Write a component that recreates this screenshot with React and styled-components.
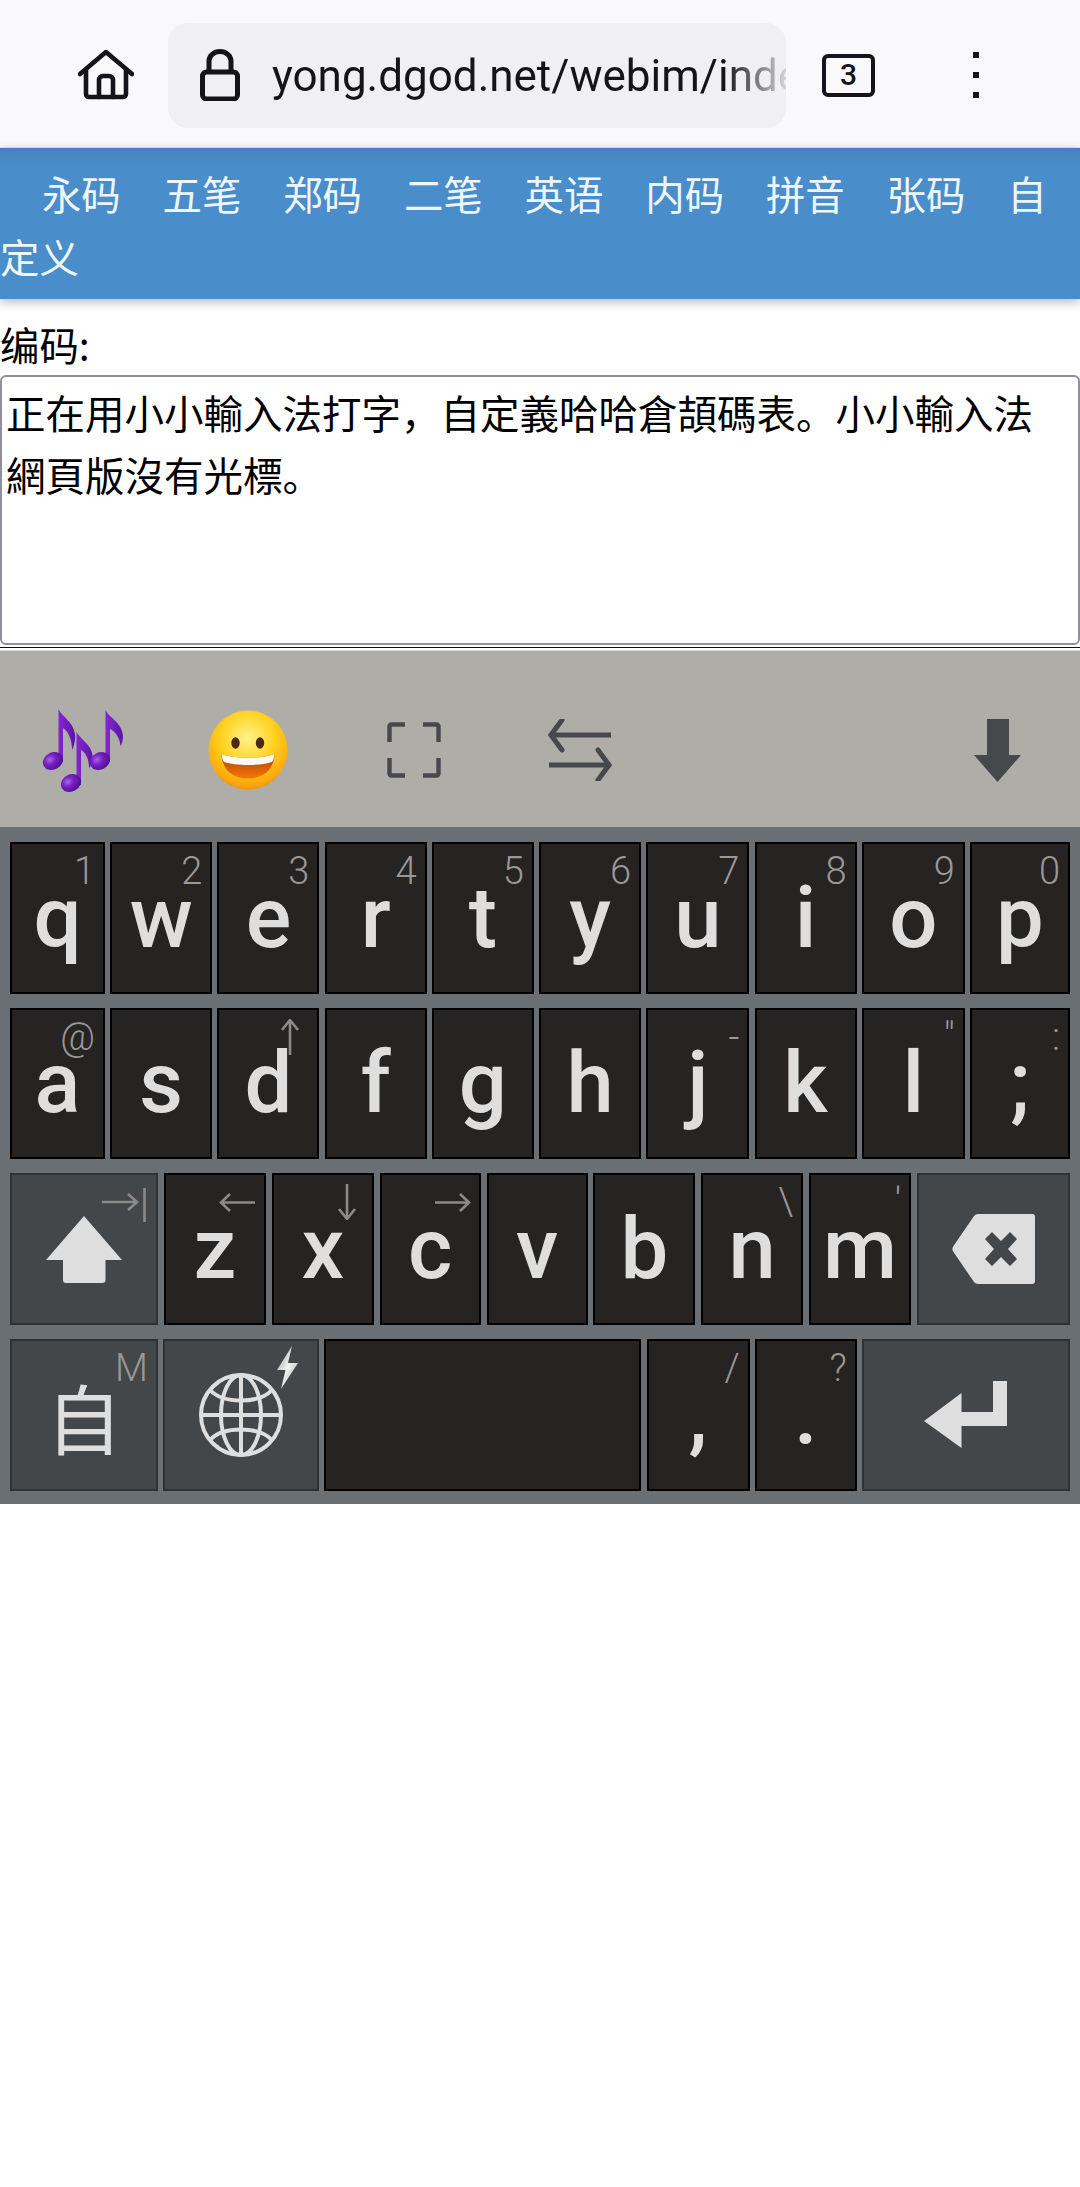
import React from "react";
import styled, { createGlobalStyle } from "styled-components";

const Global = createGlobalStyle`
  html, body { margin: 0; padding: 0; background: #fff; }
  body { font-family: "Noto Sans CJK SC", "Noto Sans", sans-serif; }
  * { box-sizing: border-box; }
`;

const Page = styled.div`
  width: 1080px;
  height: 2187px;
  background: #fff;
  overflow: hidden;
  display: flex;
  flex-direction: column;
`;

const BrowserBar = styled.header`
  height: 148px;
  background: #f9f9fb;
  display: flex;
  align-items: center;
  padding: 3px 0 0 0;
  border-bottom: 1px solid #dce8f0;
  flex-shrink: 0;
`;
const HomeSlot = styled.div`
  width: 168px;
  display: flex;
  padding-left: 78px;
`;
const UrlPill = styled.div`
  width: 618px;
  height: 105px;
  background: #f0f0f4;
  border-radius: 20px;
  display: flex;
  align-items: center;
  padding-left: 32px;
  overflow: hidden;
`;
const UrlText = styled.div`
  flex: 1;
  margin-left: 32px;
  padding-top: 2px;
  font: 400 44px/1.2 Roboto, sans-serif;
  color: #15141a;
  white-space: nowrap;
  overflow: hidden;
  -webkit-mask-image: linear-gradient(to right, #000 88%, rgba(0, 0, 0, 0.12) 100%);
  mask-image: linear-gradient(to right, #000 88%, rgba(0, 0, 0, 0.12) 100%);
`;
const TabsSlot = styled.div`
  margin-left: 36px;
  width: 53px;
  height: 43px;
  border: 4px solid #15141a;
  border-radius: 6px;
  font: 500 30px/1 Roboto, sans-serif;
  color: #15141a;
  display: flex;
  align-items: center;
  justify-content: center;
`;
const MenuDots = styled.div`
  margin-left: 98px;
  display: flex;
  flex-direction: column;
  gap: 14px;
  span {
    width: 6px;
    height: 6px;
    background: #15141a;
    display: block;
  }
`;

const Nav = styled.nav`
  height: 151px;
  padding: 13px 0 12px;
  background: linear-gradient(to bottom, #4482bf 0, #4a8dcb 18px);
  box-shadow: 0 3px 10px rgba(0, 0, 0, 0.28);
  font-size: 39.4px;
  line-height: 63px;
  color: #eef6fb;
  flex-shrink: 0;
`;
const NavLink = styled.span`
  margin-left: 41.9px;
`;

const Label = styled.div`
  padding-top: 14px;
  font-size: 39.4px;
  line-height: 62px;
  color: #000;
  height: 76px;
  flex-shrink: 0;
`;
const Editor = styled.div`
  height: 270px;
  border: 2px solid #8f8f9d;
  border-radius: 6px;
  padding: 4px 14px 0 4px;
  font-size: 39.5px;
  line-height: 62px;
  color: #000;
  flex-shrink: 0;
`;
const Rule = styled.div`
  height: 6px;
  flex-shrink: 0;
  background: linear-gradient(
    to bottom,
    #fff 0 2px,
    #111 2px 3.5px,
    #fff 3.5px 5px,
    #d8d7e6 5px 6px
  );
`;

const Toolbar = styled.div`
  height: 176px;
  padding-top: 22px;
  background: #aeada7;
  display: flex;
  justify-content: space-between;
  flex-shrink: 0;
`;
const ToolGroup = styled.div`
  display: flex;
`;
const ToolCell = styled.div`
  width: 165.6px;
  display: flex;
  align-items: center;
  justify-content: center;
`;

const Keyboard = styled.div`
  height: 677px;
  background: #6a6f73;
  padding: 15px 10px 13px;
  display: flex;
  flex-direction: column;
  gap: 14px;
  flex-shrink: 0;
`;
const Row = styled.div`
  display: flex;
  justify-content: space-between;
  height: 151.67px;
`;
const Key = styled.div`
  position: relative;
  width: ${(p) => p.$w}px;
  height: 100%;
  background: ${(p) => (p.$fn ? "#43474a" : "#252422")};
  border: 2px solid ${(p) => (p.$fn ? "#2e3235" : "#000")};
  display: flex;
  align-items: center;
  justify-content: center;
  font: 500 85px Roboto, sans-serif;
  color: #dedede;
`;
const Hint = styled.span`
  position: absolute;
  top: 8px;
  right: 8px;
  font: 300 38px/1 Roboto, sans-serif;
  color: #9a9896;
`;
const HintGlyph = styled.svg`
  position: absolute;
  top: ${(p) => p.$top}px;
  right: ${(p) => p.$right}px;
  fill: none;
  stroke: #8c8a88;
  stroke-width: 2.6;
`;
const CjkKeyLabel = styled.span`
  font: 400 76px/1 "Noto Sans CJK SC", sans-serif;
  color: #dedede;
  margin-top: 2px;
`;
const KeyIcon = styled.svg`
  fill: #dedede;
  display: block;
`;
const Bolt = styled.svg`
  position: absolute;
  top: 5px;
  right: 19px;
`;

const HomeIcon = () => (
  <svg width="56" height="50" viewBox="0 0 56 50" fill="none" stroke="#15141a" strokeWidth="4.6" strokeLinejoin="round" strokeLinecap="round">
    <path d="M2 24 L28 2 L54 24" />
    <path d="M8 20 V44 a3 3 0 0 0 3 3 H45 a3 3 0 0 0 3 -3 V20" />
    <path d="M21 47 V30 a4 4 0 0 1 4 -4 h6 a4 4 0 0 1 4 4 V47" />
  </svg>
);
const LockIcon = () => (
  <svg width="40" height="52" viewBox="0 0 40 52" fill="none" stroke="#15141a" strokeWidth="5">
    <rect x="2.5" y="23" width="35" height="27" rx="4" />
    <path d="M9 23 V12 a11 9.5 0 0 1 22 0 V23" />
  </svg>
);

const MusicIcon = () => (
  <svg width="82" height="83" viewBox="0 0 82 83">
    <defs>
      <radialGradient id="noteHead" cx="0.4" cy="0.35" r="0.7">
        <stop offset="0" stopColor="#a86ae0" />
        <stop offset="0.4" stopColor="#7a1fc6" />
        <stop offset="1" stopColor="#4a0f8c" />
      </radialGradient>
      <linearGradient id="noteStem" x1="0" y1="0" x2="1" y2="0">
        <stop offset="0" stopColor="#8526d2" />
        <stop offset="1" stopColor="#5c14a6" />
      </linearGradient>
    </defs>
    <g fill="url(#noteStem)">
      <path d="M16.5 0 C20 8 32 13 33 26 C33.5 31 32 38 30 41 C30 32 27 23 21 19 L21 52 L16.5 52 Z" />
      <path d="M34.5 23 C39 31 50 36 50.5 47 C50.5 52 49 57 47 59 C47 50 44 44 39 41 L39 76 L34.5 76 Z" />
      <path d="M63.5 1 C67 9 80 13 81 27 C81 31 80 35 78.5 37 C78 29 73 22 68 20 L68 52 L63.5 52 Z" />
    </g>
    <ellipse cx="11" cy="52" rx="10.5" ry="8.5" fill="url(#noteHead)" transform="rotate(-28 11 52)" />
    <ellipse cx="29" cy="74" rx="10.5" ry="8.5" fill="url(#noteHead)" transform="rotate(-28 29 74)" />
    <ellipse cx="58" cy="52" rx="10.5" ry="8.5" fill="url(#noteHead)" transform="rotate(-28 58 52)" />
  </svg>
);

const SmileIcon = () => (
  <svg width="80" height="80" viewBox="0 0 80 80">
    <defs>
      <radialGradient id="faceFill" cx="0.5" cy="0.35" r="0.68">
        <stop offset="0" stopColor="#fff38a" />
        <stop offset="0.5" stopColor="#ffd21f" />
        <stop offset="0.85" stopColor="#fba90f" />
        <stop offset="1" stopColor="#e98f10" />
      </radialGradient>
      <linearGradient id="mouthFill" x1="0" y1="0" x2="0" y2="1">
        <stop offset="0" stopColor="#b43c04" />
        <stop offset="1" stopColor="#f27a07" />
      </linearGradient>
    </defs>
    <circle cx="40" cy="40" r="39.5" fill="url(#faceFill)" />
    <ellipse cx="27.5" cy="33" rx="4.2" ry="5.8" fill="#4b2a12" />
    <ellipse cx="52" cy="33" rx="4.2" ry="5.8" fill="#4b2a12" />
    <path d="M13.5 44 C26 49 54 49 66.5 44 C66 60 55 68.5 40 68.5 C25 68.5 14 60 13.5 44 Z" fill="url(#mouthFill)" />
    <path d="M13.5 44 C26 49 54 49 66.5 44 C66 48 65.5 50 64 52 C52 56 28 56 16 52 C14.5 50 14 48 13.5 44 Z" fill="#fbfaf2" />
  </svg>
);

const FullscreenIcon = () => (
  <svg width="54" height="56" viewBox="0 0 54 56" fill="none" stroke="#45494c" strokeWidth="4.4" strokeLinejoin="round">
    <path d="M2.5 20 V4.5 a2 2 0 0 1 2 -2 H18" />
    <path d="M36 2.5 H49.5 a2 2 0 0 1 2 2 V20" />
    <path d="M2.5 36 V51.5 a2 2 0 0 0 2 2 H18" />
    <path d="M36 53.5 H49.5 a2 2 0 0 0 2 -2 V36" />
  </svg>
);
const SwapIcon = () => (
  <svg width="64" height="62" viewBox="0 0 64 62" fill="none" stroke="#45494c" strokeWidth="5">
    <path d="M63 16 H3" />
    <path d="M14 1 L3 16 L14 31" strokeLinecap="round" />
    <path d="M1 46 H61" />
    <path d="M50 31 L61 46 L50 61" strokeLinecap="round" />
  </svg>
);
const DownIcon = () => (
  <svg width="47" height="63" viewBox="0 0 47 63" fill="#45494c">
    <path d="M13 0 H35 V36 H47 L23.5 63 L0 36 H13 Z" />
  </svg>
);

const ShiftIcon = () => (
  <KeyIcon width="76" height="67" viewBox="0 0 76 67">
    <path d="M38 0 L76 44 H59.5 V64 a3 3 0 0 1 -3 3 H20 a3 3 0 0 1 -3 -3 V44 H0 Z" />
  </KeyIcon>
);
const BackspaceIcon = () => (
  <KeyIcon width="83" height="70" viewBox="0 0 83 70">
    <path fillRule="evenodd" d="M26 0 H80 a3 3 0 0 1 3 3 V67 a3 3 0 0 1 -3 3 H26 a6 6 0 0 1 -4 -2 L1.5 38 a5 5 0 0 1 0 -6 L22 2 a6 6 0 0 1 4 -2 Z M33 25 L42 35 L33 45 L40 52 L49 43 L58 52 L65 45 L56 35 L65 25 L58 18 L49 27 L40 18 Z" />
  </KeyIcon>
);
const EnterIcon = () => (
  <KeyIcon width="83" height="67" viewBox="0 0 83 67">
    <path d="M0 40 L37.5 12 V31 H69 V0 H83 V45 H37.5 V67 Z" />
  </KeyIcon>
);
const GlobeIcon = () => (
  <svg width="84" height="84" viewBox="0 0 84 84" fill="none" stroke="#dedede" strokeWidth="4">
    <circle cx="42" cy="42" r="40" />
    <ellipse cx="42" cy="42" rx="20" ry="40" />
    <path d="M42 2 V82" />
    <path d="M2 42 H82" />
    <path d="M11 17 C24 31 60 31 73 17" />
    <path d="M11 67 C24 53 60 53 73 67" />
  </svg>
);
const BoltIcon = () => (
  <Bolt width="21" height="43" viewBox="0 0 21 43">
    <defs>
      <linearGradient id="boltFill" x1="0" y1="0" x2="1" y2="1">
        <stop offset="0" stopColor="#8d8f90" />
        <stop offset="0.5" stopColor="#f4f4f4" />
        <stop offset="1" stopColor="#9a9c9d" />
      </linearGradient>
    </defs>
    <path d="M15 0 L11 17 L21 17 L4 43 L8.5 24 L0 24 Z" fill="url(#boltFill)" />
  </Bolt>
);

const hintGlyphs = {
  up: (
    <HintGlyph width="18" height="36" viewBox="0 0 18 36" $top={9} $right={18}>
      <path d="M9 36 V1 M1 11 L9 1 L17 11" />
    </HintGlyph>
  ),
  left: (
    <HintGlyph width="36" height="19" viewBox="0 0 36 19" $top={18} $right={9}>
      <path d="M36 9.5 H2 M11 1 L2 9.5 L11 18" />
    </HintGlyph>
  ),
  down: (
    <HintGlyph width="18" height="36" viewBox="0 0 18 36" $top={9} $right={16}>
      <path d="M9 0 V35 M1 25 L9 35 L17 25" />
    </HintGlyph>
  ),
  right: (
    <HintGlyph width="36" height="19" viewBox="0 0 36 19" $top={18} $right={8}>
      <path d="M0 9.5 H34 M25 1 L34 9.5 L25 18" />
    </HintGlyph>
  ),
  tab: (
    <HintGlyph width="44" height="34" viewBox="0 0 44 34" $top={13} $right={10}>
      <path d="M0 14 H35 M26 6 L35 14 L26 22 M42.5 0 V34" />
    </HintGlyph>
  ),
};

const rows = [
  [
    { t: "q", h: "1", w: 95 }, { t: "w", h: "2", w: 102 }, { t: "e", h: "3", w: 102 },
    { t: "r", h: "4", w: 102 }, { t: "t", h: "5", w: 102 }, { t: "y", h: "6", w: 102 },
    { t: "u", h: "7", w: 103 }, { t: "i", h: "8", w: 102 }, { t: "o", h: "9", w: 103 },
    { t: "p", h: "0", w: 100 },
  ],
  [
    { t: "a", h: "@", w: 95 }, { t: "s", w: 102 }, { t: "d", g: "up", w: 102 },
    { t: "f", w: 102 }, { t: "g", w: 102 }, { t: "h", w: 102 },
    { t: "j", h: "-", w: 103 }, { t: "k", w: 102 }, { t: "l", h: '"', w: 103 },
    { t: ";", h: ":", w: 100 },
  ],
  [
    { icon: <ShiftIcon />, g: "tab", w: 148, fn: true },
    { t: "z", g: "left", w: 102 }, { t: "x", g: "down", w: 102 }, { t: "c", g: "right", w: 101 },
    { t: "v", w: 101 }, { t: "b", w: 102 }, { t: "n", h: "\\", w: 102 }, { t: "m", h: "'", w: 102 },
    { icon: <BackspaceIcon />, w: 153, fn: true },
  ],
  [
    { icon: <CjkKeyLabel>自</CjkKeyLabel>, h: "M", w: 148, fn: true },
    { icon: <><GlobeIcon /><BoltIcon /></>, w: 156, fn: true },
    { t: "", w: 317 },
    { t: ",", h: "/", w: 103 }, { t: ".", h: "?", w: 102 },
    { icon: <EnterIcon />, w: 208, fn: true },
  ],
];

const navItems = ["永码", "五笔", "郑码", "二笔", "英语", "内码", "拼音", "张码", "自定义"];

export default function App() {
  return (
    <Page>
      <Global />
      <BrowserBar>
        <HomeSlot><HomeIcon /></HomeSlot>
        <UrlPill>
          <LockIcon />
          <UrlText>yong.dgod.net/webim/inde</UrlText>
        </UrlPill>
        <TabsSlot>3</TabsSlot>
        <MenuDots><span /><span /><span /></MenuDots>
      </BrowserBar>
      <Nav>
        {navItems.map((n) => (
          <NavLink key={n}>{n}</NavLink>
        ))}
      </Nav>
      <Label>编码:</Label>
      <Editor>正在用小小輸入法打字，自定義哈哈倉頡碼表。小小輸入法網頁版沒有光標。</Editor>
      <Rule />
      <Toolbar>
        <ToolGroup>
          <ToolCell><MusicIcon /></ToolCell>
          <ToolCell><SmileIcon /></ToolCell>
          <ToolCell><FullscreenIcon /></ToolCell>
          <ToolCell><SwapIcon /></ToolCell>
        </ToolGroup>
        <ToolCell><DownIcon /></ToolCell>
      </Toolbar>
      <Keyboard>
        {rows.map((row, i) => (
          <Row key={i}>
            {row.map((k, j) => (
              <Key key={j} $w={k.w} $fn={k.fn}>
                {k.icon || k.t}
                {k.h && <Hint>{k.h}</Hint>}
                {k.g && hintGlyphs[k.g]}
              </Key>
            ))}
          </Row>
        ))}
      </Keyboard>
    </Page>
  );
}
